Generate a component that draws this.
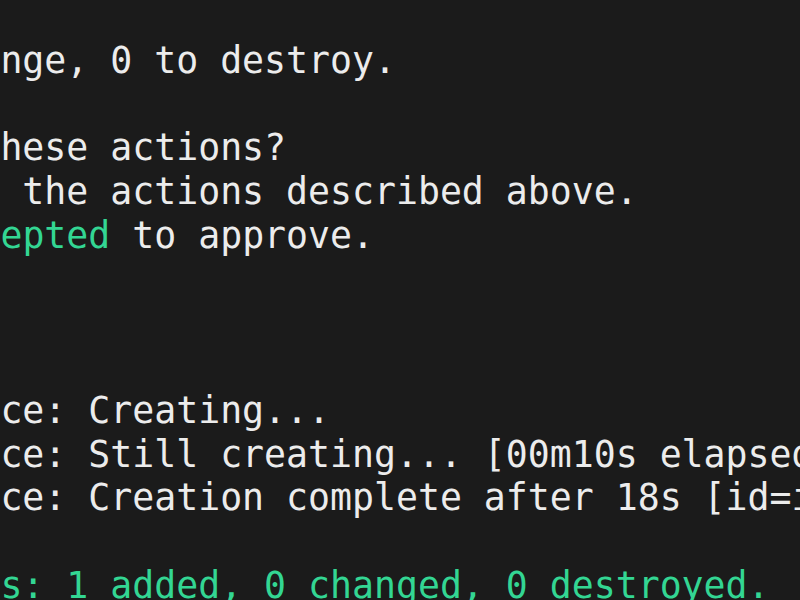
import React from "react";

const W = "text-[#ececec]";
const G = "text-[#33d693]";

type Seg = { t: string; c?: string };
const lines: Seg[][] = [
  [{ t: "" }],
  [{ t: "Plan: 1 to add, 0 to change, 0 to destroy." }],
  [{ t: "" }],
  [{ t: "Do you want to perform these actions?" }],
  [{ t: "  Terraform will perform the actions described above." }],
  [{ t: "  Only 'yes' will be acc" }, { t: "epted", c: G }, { t: " to approve." }],
  [{ t: "" }],
  [{ t: "  Enter a value: yes" }],
  [{ t: "" }],
  [{ t: "aws_instance.test_instance: Creating..." }],
  [{ t: "aws_instance.test_instance: Still creating... [00m10s elapsed]" }],
  [{ t: "aws_instance.test_instance: Creation complete after 18s [id=i-0a1b2c3d4e5f67890]" }],
  [{ t: "" }],
  [{ t: "Apply complete! Resources: 1 added, 0 changed, 0 destroyed.", c: G }],
];

export default function App() {
  return (
    <div className="w-[800px] h-[600px] overflow-hidden bg-[#1b1b1b]">
      <div
        className={`ml-[-527px] mt-[-5px] whitespace-pre text-[36.5px] leading-[43.75px] ${W}`}
        style={{ fontFamily: '"DejaVu Sans Mono", monospace' }}
      >
        {lines.map((segs, i) => (
          <div key={i} className="h-[43.75px]">
            {segs.map((s, j) => (
              <span key={j} className={s.c ?? ""}>
                {s.t}
              </span>
            ))}
          </div>
        ))}
      </div>
    </div>
  );
}
